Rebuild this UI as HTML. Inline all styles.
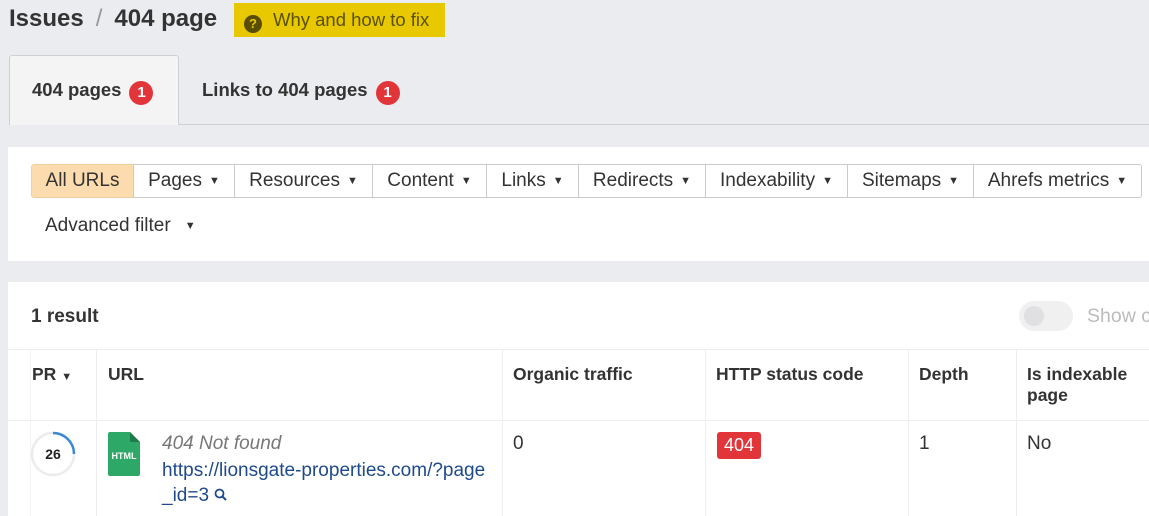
<!DOCTYPE html>
<html><head><meta charset="utf-8"><style>
*{box-sizing:border-box;margin:0;padding:0}
body{width:1149px;height:516px;overflow:hidden;background:#ebecef;font-family:"Liberation Sans",Arial,sans-serif;color:#333;position:relative}
.a{position:absolute}
.title{left:9px;top:5px;font-size:24px;font-weight:bold;color:#333;white-space:nowrap}
.title .sl{color:#999;font-weight:normal;margin:0 12px}
.why{left:234px;top:3px;width:211px;height:34px;background:#e8c800;color:#5a5000;font-size:18.5px;line-height:34px;padding-left:10px;white-space:nowrap}
.why .q{display:inline-block;width:18px;height:18px;border-radius:50%;background:#594e00;color:#e8c800;font-size:13px;font-weight:bold;text-align:center;line-height:18px;margin-right:11px;vertical-align:-2px}
.tab{top:55px;left:9px;width:170px;height:70px;background:#f4f4f5;border:1px solid #cfd0d3;border-bottom:none;border-radius:3px 3px 0 0}
.tline{left:178px;top:124px;right:0;height:1px;background:#cfd0d3}
.tt{top:79px;font-size:18.5px;font-weight:bold;color:#333;white-space:nowrap}
.b{display:inline-block;width:24px;height:24px;border-radius:50%;background:#e2353a;color:#fff;font-size:15px;text-align:center;line-height:24px;margin-left:8px;vertical-align:-1px}
.panel{background:#fff;left:8px;right:0}
.btn{top:164px;height:34px;border:1px solid #c9cacd;font-size:19px;line-height:32px;color:#333;text-align:center;background:#fff;white-space:nowrap}
.ar{font-size:11px;margin-left:7px;vertical-align:2px}
.vl{width:1px;background:#eee;top:349px;bottom:0}
.hl{height:1px;background:#eee;left:8px;right:0}
.th{top:364px;font-size:17.5px;font-weight:bold;color:#333;line-height:21px}
.td{top:433px;font-size:19px;color:#333}
</style></head><body>
<div class="a title">Issues<span class="sl">/</span>404 page</div>
<div class="a why"><span class="q">?</span>Why and how to fix</div>
<div class="a tab"></div>
<div class="a tline"></div>
<div class="a tt" style="left:32px">404 pages<span class="b">1</span></div>
<div class="a tt" style="left:202px">Links to 404 pages<span class="b">1</span></div>

<div class="a panel" style="top:147px;height:114px"></div>
<div class="a btn" style="left:31px;width:103px;background:#fcdcae;border-color:#f1cf9c;border-radius:3px 0 0 3px">All URLs</div>
<div class="a btn" style="left:133px;width:102px">Pages<span class="ar">▼</span></div>
<div class="a btn" style="left:234px;width:139px">Resources<span class="ar">▼</span></div>
<div class="a btn" style="left:372px;width:115px">Content<span class="ar">▼</span></div>
<div class="a btn" style="left:486px;width:93px">Links<span class="ar">▼</span></div>
<div class="a btn" style="left:578px;width:128px">Redirects<span class="ar">▼</span></div>
<div class="a btn" style="left:705px;width:143px">Indexability<span class="ar">▼</span></div>
<div class="a btn" style="left:847px;width:127px">Sitemaps<span class="ar">▼</span></div>
<div class="a btn" style="left:973px;width:169px;border-radius:0 3px 3px 0">Ahrefs metrics<span class="ar">▼</span></div>
<div class="a" style="left:45px;top:215px;font-size:19px;color:#333;white-space:nowrap">Advanced filter<span class="ar" style="margin-left:14px">▼</span></div>

<div class="a panel" style="top:282px;bottom:0"></div>
<div class="a" style="left:31px;top:306px;font-size:19px;font-weight:bold">1 result</div>
<div class="a" style="left:1019px;top:301px;width:54px;height:30px;border-radius:15px;background:#f0f0f1"></div>
<div class="a" style="left:1024px;top:306px;width:20px;height:20px;border-radius:50%;background:#e0e0e2"></div>
<div class="a" style="left:1087px;top:305px;font-size:19.5px;color:#bbb;white-space:nowrap">Show c</div>

<div class="a hl" style="top:349px"></div>
<div class="a hl" style="top:420px"></div>
<div class="a vl" style="left:30px;background:#f4f4f4"></div>
<div class="a vl" style="left:96px"></div>
<div class="a vl" style="left:502px"></div>
<div class="a vl" style="left:705px"></div>
<div class="a vl" style="left:908px"></div>
<div class="a vl" style="left:1016px"></div>

<div class="a th" style="left:32px">PR <span style="font-size:11px">▼</span></div>
<div class="a th" style="left:108px">URL</div>
<div class="a th" style="left:513px">Organic traffic</div>
<div class="a th" style="left:716px">HTTP status code</div>
<div class="a th" style="left:919px">Depth</div>
<div class="a th" style="left:1027px">Is indexable<br>page</div>

<svg class="a" style="left:30px;top:431px" width="46" height="46" viewBox="0 0 46 46"><circle cx="23" cy="23" r="21" fill="none" stroke="#ececec" stroke-width="2.5"/><path d="M23 2 A21 21 0 0 1 44 23" fill="none" stroke="#3a88d6" stroke-width="2.5"/><text x="23" y="28" text-anchor="middle" font-family="Liberation Sans" font-size="14" font-weight="bold" fill="#222">26</text></svg>
<svg class="a" style="left:108px;top:432px" width="32" height="44" viewBox="0 0 32 44"><path d="M2 0H22L32 10V42a2 2 0 0 1-2 2H2a2 2 0 0 1-2-2V2a2 2 0 0 1 2-2z" fill="#2ea866"/><path d="M22 0V10H32z" fill="#1e7a48"/><text x="16" y="27" text-anchor="middle" font-family="Liberation Sans" font-size="9" font-weight="bold" fill="#fff">HTML</text></svg>
<div class="a" style="left:162px;top:433px;font-size:19px;font-style:italic;color:#777;white-space:nowrap">404 Not found</div>
<div class="a" style="left:162px;top:458px;font-size:19px;color:#1e4a8c;line-height:25px;width:340px;white-space:nowrap">https://lionsgate-properties.com/?page<br>_id=3 <svg width="14" height="14" viewBox="0 0 14 14" style="vertical-align:-1px"><circle cx="5.5" cy="5.5" r="4" fill="none" stroke="#1e4a8c" stroke-width="1.8"/><path d="M8.5 8.5L12 12" stroke="#1e4a8c" stroke-width="2"/></svg></div>
<div class="a td" style="left:513px">0</div>
<div class="a" style="left:717px;top:432px;width:44px;height:27px;background:#e2353a;border-radius:3px;color:#fff;font-size:18px;text-align:center;line-height:27px">404</div>
<div class="a td" style="left:919px">1</div>
<div class="a td" style="left:1027px">No</div>
</body></html>
